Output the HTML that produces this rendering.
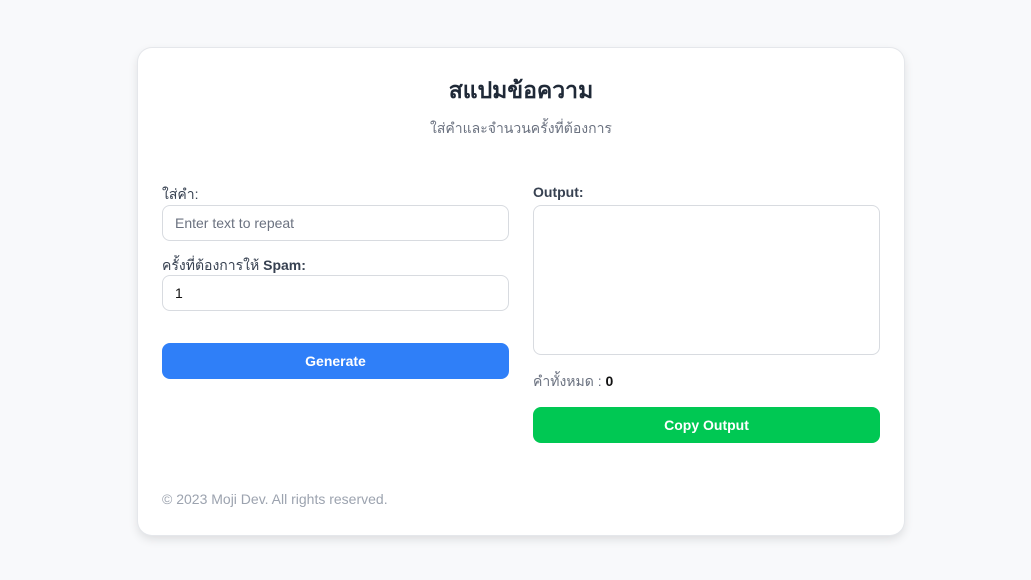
<!DOCTYPE html>
<html><head><meta charset="utf-8"><style>
*{box-sizing:border-box;margin:0;padding:0}
body{width:1031px;height:580px;background:#f8f9fb;font-family:"Liberation Sans","DejaVu Sans",sans-serif;position:relative;overflow:hidden;color:#1f2937}
.card{position:absolute;left:138px;top:48px;width:766px;height:487px;background:#fff;border-radius:14px;box-shadow:0 0 0 1px #e5e7eb,0 4px 10px rgba(0,0,0,.12)}
.abs{position:absolute}
h1{position:absolute;left:0;right:0;top:25px;text-align:center;font-size:23px;font-weight:bold;color:#1f2937}
.sub{left:0;right:0;top:70px;text-align:center;font-size:14px;color:#6b7280}
.lbl{font-size:14px;color:#374151}
.inp{border:1px solid #d8dbe0;border-radius:8px;background:#fff;font-size:14px;padding:0 12px;display:flex;align-items:center}
.btn{border-radius:8px;color:#fff;font-weight:bold;font-size:14px;display:flex;align-items:center;justify-content:center}
</style></head><body>
<div class="card">
<h1>สแปมข้อความ</h1>
<div class="abs sub">ใส่คำและจำนวนครั้งที่ต้องการ</div>
<div class="abs lbl" style="left:24px;top:136px">ใส่คำ:</div>
<div class="abs inp" style="left:24px;top:157px;width:347px;height:36px;color:#6b7280">Enter text to repeat</div>
<div class="abs lbl" style="left:24px;top:207px">ครั้งที่ต้องการให้ <b>Spam:</b></div>
<div class="abs inp" style="left:24px;top:227px;width:347px;height:36px;color:#111">1</div>
<div class="abs btn" style="left:24px;top:295px;width:347px;height:36px;background:#2f7ff8">Generate</div>
<div class="abs lbl" style="left:395px;top:136px"><b>Output:</b></div>
<div class="abs inp" style="left:395px;top:157px;width:347px;height:150px"></div>
<div class="abs lbl" style="left:395px;top:323px;color:#6b7280">คำทั้งหมด : <b style="color:#111">0</b></div>
<div class="abs btn" style="left:395px;top:359px;width:347px;height:36px;background:#00c853">Copy Output</div>
<div class="abs" style="left:24px;top:443px;font-size:14px;color:#9ca3af">© 2023 Moji Dev. All rights reserved.</div>
</div>
</body></html>
